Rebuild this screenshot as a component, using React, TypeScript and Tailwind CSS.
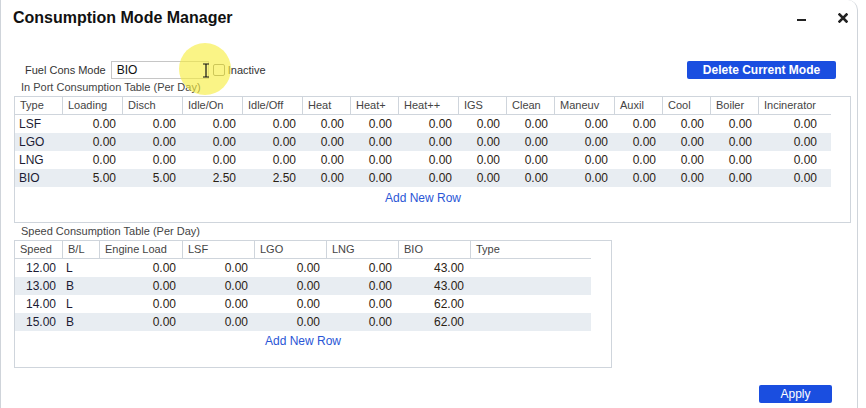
import React from 'react';

type PortRow = { type: string; values: string[] };
type SpeedRow = { speed: string; bl: string; values: string[] };

const portCols: { label: string; w: string }[] = [
  { label: 'Type', w: 'w-[48px]' },
  { label: 'Loading', w: 'w-[60px]' },
  { label: 'Disch', w: 'w-[60px]' },
  { label: 'Idle/On', w: 'w-[60px]' },
  { label: 'Idle/Off', w: 'w-[60px]' },
  { label: 'Heat', w: 'w-[48px]' },
  { label: 'Heat+', w: 'w-[48px]' },
  { label: 'Heat++', w: 'w-[60px]' },
  { label: 'IGS', w: 'w-[48px]' },
  { label: 'Clean', w: 'w-[48px]' },
  { label: 'Maneuv', w: 'w-[60px]' },
  { label: 'Auxil', w: 'w-[48px]' },
  { label: 'Cool', w: 'w-[48px]' },
  { label: 'Boiler', w: 'w-[48px]' },
  { label: 'Incinerator', w: 'w-[72px]' },
];

const z = (n: number) => Array(n).fill('0.00');

const portRows: PortRow[] = [
  { type: 'LSF', values: z(14) },
  { type: 'LGO', values: z(14) },
  { type: 'LNG', values: z(14) },
  { type: 'BIO', values: ['5.00', '5.00', '2.50', '2.50', ...z(10)] },
];

const speedCols: { label: string; w: string }[] = [
  { label: 'Speed', w: 'w-[48px]' },
  { label: 'B/L', w: 'w-[37px]' },
  { label: 'Engine Load', w: 'w-[83px]' },
  { label: 'LSF', w: 'w-[72px]' },
  { label: 'LGO', w: 'w-[72px]' },
  { label: 'LNG', w: 'w-[72px]' },
  { label: 'BIO', w: 'w-[72px]' },
  { label: 'Type', w: 'w-[120px]' },
];

const speedRows: SpeedRow[] = [
  { speed: '12.00', bl: 'L', values: ['0.00', '0.00', '0.00', '0.00', '43.00'] },
  { speed: '13.00', bl: 'B', values: ['0.00', '0.00', '0.00', '0.00', '43.00'] },
  { speed: '14.00', bl: 'L', values: ['0.00', '0.00', '0.00', '0.00', '62.00'] },
  { speed: '15.00', bl: 'B', values: ['0.00', '0.00', '0.00', '0.00', '62.00'] },
];

const HeaderRow = ({ cols }: { cols: { label: string; w: string }[] }) => (
  <div className="flex h-[18px] border-b border-[#cfd5dc] text-[11px] text-[#444]">
    {cols.map((c, i) => (
      <div
        key={c.label + i}
        className={`${c.w} shrink-0 flex items-center pl-[5px] ${i < cols.length - 1 ? 'border-r border-[#cfd5dc]' : ''}`}
      >
        {c.label}
      </div>
    ))}
  </div>
);

const AddNewRow = () => (
  <div className="h-[20px] flex items-center justify-center text-[12px] text-[#2a56d6]">Add New Row</div>
);

export default function App() {
  return (
    <div className="w-[866px] h-[408px] bg-white overflow-hidden font-['Liberation_Sans',Arial,sans-serif]">
      <div className="relative w-[858px] h-[408px] border-l border-r border-[#cfd4da] rounded-tr-[10px] flex flex-col">
        {/* title bar */}
        <div className="h-[36px] flex items-center pl-[12px] pr-[9px]">
          <div className="text-[16px] font-bold text-[#111]">Consumption Mode Manager</div>
          <div className="ml-auto flex items-center gap-[32px]">
            <div className="w-[9px] h-[2px] bg-[#222] mt-[3px]" />
            <svg width="10" height="10" viewBox="0 0 10 10">
              <path d="M1.5 1.5 L8.5 8.5 M8.5 1.5 L1.5 8.5" stroke="#222" strokeWidth="2.6" strokeLinecap="square" />
            </svg>
          </div>
        </div>

        {/* mode row */}
        <div className="mt-[25px] h-[18px] flex items-center pl-[24px] pr-[21px] text-[11px] text-[#333]">
          <span>Fuel Cons Mode</span>
          <div className="ml-[5px] w-[98px] h-[18px] border border-[#c6c6c6] flex items-center pl-[5px] text-[12px] text-[#111]">
            BIO
          </div>
          <div className="ml-[4px] w-[12px] h-[12px] border border-[#8a8a8a] rounded-[2px] bg-white/40" />
          <span className="ml-[3px] text-[11px]">Inactive</span>
          <button className="ml-auto w-[149px] h-[18px] bg-[#1a4ee0] rounded-[2px] text-white text-[12px] font-bold flex items-center justify-center">
            Delete Current Mode
          </button>
        </div>

        {/* in port */}
        <div className="h-[17px] flex items-center pl-[20px] text-[11px] text-[#444]">In Port Consumption Table (Per Day)</div>
        <div className="ml-[13px] w-[837px] h-[127px] border border-[#cfd5dc]">
          <div className="w-[816px]">
            <HeaderRow cols={portCols} />
            {portRows.map((r, ri) => (
              <div key={r.type} className={`flex h-[18px] text-[12px] items-center ${ri % 2 ? 'bg-[#e8edf2]' : ''}`}>
                <div className="w-[48px] shrink-0 pl-[4px] text-[#1c1c34]">{r.type}</div>
                {r.values.map((v, i) => (
                  <div
                    key={i}
                    className={`${portCols[i + 1].w} shrink-0 text-right ${i === 13 ? 'pr-[14px]' : 'pr-[7px]'} text-[#2b2214]`}
                  >
                    {v}
                  </div>
                ))}
              </div>
            ))}
            <div className="mt-[1px]">
              <AddNewRow />
            </div>
          </div>
        </div>

        {/* speed */}
        <div className="h-[17px] flex items-center pl-[20px] text-[11px] text-[#444]">Speed Consumption Table (Per Day)</div>
        <div className="ml-[13px] w-[598px] h-[128px] border border-[#cfd5dc]">
          <div className="w-[576px]">
            <HeaderRow cols={speedCols} />
            {speedRows.map((r, ri) => (
              <div key={r.speed} className={`flex h-[18px] text-[12px] items-center ${ri % 2 ? 'bg-[#e8edf2]' : ''}`}>
                <div className="w-[48px] shrink-0 text-right pr-[7px] text-[#1c1c34]">{r.speed}</div>
                <div className="w-[37px] shrink-0 pl-[3px] text-[#1c1c34]">{r.bl}</div>
                {r.values.map((v, i) => (
                  <div key={i} className={`${speedCols[i + 2].w} shrink-0 text-right pr-[7px] text-[#2b2214]`}>
                    {v}
                  </div>
                ))}
                <div className="w-[120px] shrink-0" />
              </div>
            ))}
            <AddNewRow />
          </div>
        </div>

        <div className="mt-[17px] flex justify-end pr-[25px]">
          <button className="w-[73px] h-[18px] bg-[#1a4ee0] rounded-[2px] text-white text-[12px] flex items-center justify-center">
            Apply
          </button>
        </div>

        {/* recording cursor highlight */}
        <div className="absolute left-[178px] top-[43px] w-[52px] h-[52px] rounded-full bg-[rgba(247,238,60,0.62)] pointer-events-none" />
        <svg className="absolute left-[201px] top-[63px] pointer-events-none" width="8" height="15" viewBox="0 0 8 15">
          <path d="M1 1 H7 M4 1 V14 M1 14 H7" stroke="#111" strokeWidth="1.2" fill="none" />
        </svg>
      </div>
    </div>
  );
}
